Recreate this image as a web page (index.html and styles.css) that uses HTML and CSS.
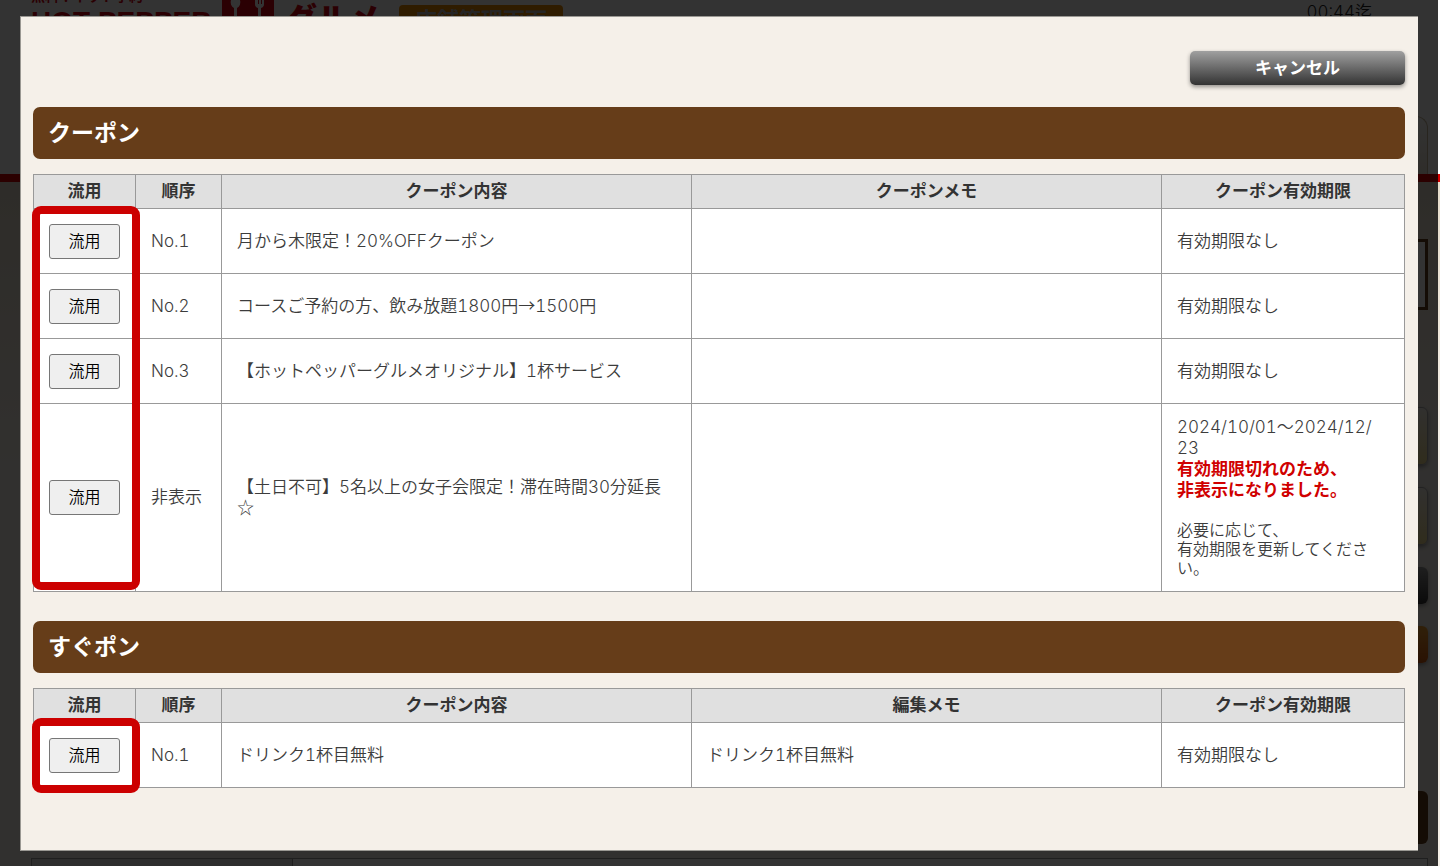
FILE: index.html
```html
<!DOCTYPE html>
<html lang="ja">
<head>
    <meta charset="UTF-8">
    <title>クーポン流用</title>
    <link rel="stylesheet" href="styles.css">
</head>
<body>

<div class="page">
    <header class="header">
        <div class="brand">
            <div class="logo">
                <span class="logo-sub">無料！ネット予約</span>
                <span class="logo-name">HOT PEPPER</span>
            </div>
            <svg class="logo-icon" width="54" height="44" viewBox="0 0 54 44">
                <rect x="1" y="-8" width="52" height="50" rx="6" fill="#d8000f"/>
                <path d="M10 0a5 6 0 0 0 3 8v22h3V8a5 6 0 0 0 3-8z" fill="#fff"/>
                <path d="M34 0v4a4 4 0 0 0 3 4v22h3V8a4 4 0 0 0 3-4V0h-2v4h-1V0h-2v4h-1V0z" fill="#fff"/>
            </svg>
            <span class="logo-gourmet">グルメ</span>
            <span class="logo-badge">店舗管理画面</span>
        </div>
        <div class="deadline">00:44迄</div>
        <div class="tab"></div>
    </header>
    <div class="main">
        <div class="notice"></div>
        <div class="panel"></div>
        <div class="panel"></div>
        <div class="bar bar-dark"></div>
        <div class="bar bar-orange"></div>
        <div class="bar-title"></div>
        <div class="grid-row"><div class="grid-label"></div></div>
    </div>
</div>

<div class="overlay">
    <div class="modal">
        <div class="actions">
            <button type="button" class="cancel">キャンセル</button>
        </div>

        <section class="section">
            <h2 class="title">クーポン</h2>
            <div class="table-wrap">
                <table class="coupons">
                    <colgroup>
                        <col class="col-use">
                        <col class="col-order">
                        <col>
                        <col>
                        <col class="col-limit">
                    </colgroup>
                    <thead>
                        <tr>
                            <th>流用</th>
                            <th>順序</th>
                            <th>クーポン内容</th>
                            <th>クーポンメモ</th>
                            <th>クーポン有効期限</th>
                        </tr>
                    </thead>
                    <tbody>
                        <tr>
                            <td><button type="button" class="use">流用</button></td>
                            <td>No.1</td>
                            <td>月から木限定！20%OFFクーポン</td>
                            <td></td>
                            <td>有効期限なし</td>
                        </tr>
                        <tr>
                            <td><button type="button" class="use">流用</button></td>
                            <td>No.2</td>
                            <td>コースご予約の方、飲み放題1800円<span class="symbol">→</span>1500円</td>
                            <td></td>
                            <td>有効期限なし</td>
                        </tr>
                        <tr>
                            <td><button type="button" class="use">流用</button></td>
                            <td>No.3</td>
                            <td>【ホットペッパーグルメオリジナル】1杯サービス</td>
                            <td></td>
                            <td>有効期限なし</td>
                        </tr>
                        <tr>
                            <td><button type="button" class="use">流用</button></td>
                            <td>非表示</td>
                            <td>【土日不可】5名以上の女子会限定！滞在時間30分延長<br><span class="symbol">☆</span></td>
                            <td></td>
                            <td>
                                2024/10/01〜2024/12/<br>23
                                <strong class="expired">有効期限切れのため、<br>非表示になりました。</strong>
                                <p class="hint">必要に応じて、<br>有効期限を更新してください。</p>
                            </td>
                        </tr>
                    </tbody>
                </table>
                <div class="frame"></div>
            </div>
        </section>

        <section class="section">
            <h2 class="title">すぐポン</h2>
            <div class="table-wrap">
                <table class="coupons">
                    <colgroup>
                        <col class="col-use">
                        <col class="col-order">
                        <col>
                        <col>
                        <col class="col-limit">
                    </colgroup>
                    <thead>
                        <tr>
                            <th>流用</th>
                            <th>順序</th>
                            <th>クーポン内容</th>
                            <th>編集メモ</th>
                            <th>クーポン有効期限</th>
                        </tr>
                    </thead>
                    <tbody>
                        <tr>
                            <td><button type="button" class="use">流用</button></td>
                            <td>No.1</td>
                            <td>ドリンク1杯目無料</td>
                            <td>ドリンク1杯目無料</td>
                            <td>有効期限なし</td>
                        </tr>
                    </tbody>
                </table>
                <div class="frame frame-single"></div>
            </div>
        </section>
    </div>
</div>

</body>
</html>
```
FILE: styles.css
```css
* {
    box-sizing: border-box;
}
body {
    margin: 0;
    color: #3c3c3c;
    font-family: Inter, "Noto Sans CJK JP", sans-serif;
    font-size: 17px;
    font-weight: 350;
    line-height: 21px;
    font-variant-numeric: tabular-nums;
}
.page {
    height: 100vh;
    overflow: hidden;
    background: #f5f0e8;
}

/* page behind the dialog */
.header {
    display: flex;
    justify-content: space-between;
    height: 182px;
    padding: 0 12px 0 31px;
    background: #fff;
    border-bottom: 8px solid #d80000;
}
.brand {
    display: flex;
    align-items: flex-start;
    flex: 1;
    color: #d8000f;
    font-weight: bold;
}
.logo {
    display: flex;
    flex-direction: column;
    margin-top: -12px;
    width: 190px;
    white-space: nowrap;
}
.logo-sub {
    font-size: 14px;
    line-height: 16px;
}
.logo-name {
    font-family: "Liberation Sans", sans-serif;
    font-size: 28px;
    line-height: 36px;
}
.logo-gourmet {
    margin: 4px 18px 0 10px;
    font-size: 32px;
    line-height: 32px;
    font-weight: 900;
}
.logo-badge {
    margin-top: 5px;
    padding: 3px 16px;
    border-radius: 4px;
    background: #e88a00;
    color: #bbb;
    font-size: 22px;
    line-height: 24px;
}
.deadline {
    margin-top: 2px;
    color: #222;
}
.tab {
    width: 56px;
    margin-top: 116px;
    border: 1px solid #c8b99c;
    border-bottom: 0;
    border-radius: 0 12px 0 0;
    background: linear-gradient(#fff, #eae2d2);
}
.main {
    padding: 57px 12px 20px 31px;
    background: linear-gradient(#e6dccb, #f5f0e8 280px);
}
.notice {
    height: 71px;
    margin-bottom: 97px;
    border: 3px solid #663d19;
    background: #fff;
}
.panel {
    height: 58px;
    margin-bottom: 22px;
    border: 1px solid #aaa;
    border-radius: 6px;
    background: linear-gradient(#f4f0e8, #f0dc90);
    box-shadow: 0 2px 4px #999;
}
.bar {
    height: 37px;
    margin-bottom: 22px;
    border-radius: 6px;
    box-shadow: 0 2px 4px #999;
}
.bar-dark {
    background: linear-gradient(#999, #333);
}
.bar-orange {
    background: linear-gradient(#f0a030, #d05a10);
}
.bar-title {
    height: 53px;
    margin: 128px 0 14px;
    border-radius: 6px;
    background: #663d19;
}
.grid-row {
    height: 60px;
    border: 1px solid #999;
    background: #fff;
}
.grid-label {
    width: 261px;
    height: 100%;
    border-right: 1px solid #999;
    background: #e0e0e0;
}

/* dialog */
.overlay {
    position: fixed;
    inset: 0 2px 0 0;
    padding: 16px 20px 15px 20px;
    background: rgba(0, 0, 0, 0.8);
}
.modal {
    height: 100%;
    padding: 34px 13px 0 12px;
    border: 1px solid #9a9893;
    border-right: 0;
    background: #f5f0e9;
}
.actions {
    display: flex;
    justify-content: flex-end;
    margin-bottom: 22px;
}
.cancel {
    width: 215px;
    height: 34px;
    padding: 0 0 3px;
    border: 0;
    border-radius: 5px;
    background: linear-gradient(#a0a0a0, #333);
    box-shadow: 0 2px 4px rgba(0, 0, 0, 0.4);
    color: #fff;
    font: bold 17px "Noto Sans CJK JP", sans-serif;
}
.section {
    margin-bottom: 29px;
}
.title {
    margin: 0 0 15px;
    padding: 0 15px;
    border-radius: 7px;
    background: #663d19;
    color: #fff;
    font-size: 23px;
    line-height: 52px;
}
.table-wrap {
    position: relative;
}
.coupons {
    width: 100%;
    table-layout: fixed;
    border-collapse: collapse;
    background: #fff;
}
.coupons th,
.coupons td {
    border: 1px solid #999;
}
.coupons th {
    height: 34px;
    padding: 0;
    background: #e0e0e0;
    color: #333;
}
.coupons td {
    height: 65px;
    padding: 13px 15px;
}
.col-use {
    width: 102px;
}
.col-order {
    width: 86px;
}
.col-limit {
    width: 243px;
}
.use {
    display: block;
    width: 71px;
    height: 35px;
    padding: 0 0 3px;
    border: 1px solid #767676;
    border-radius: 3px;
    background: #efefef;
    color: #000;
    font: 350 16px "Noto Sans CJK JP", sans-serif;
}
.symbol {
    font-family: "Noto Sans CJK JP", sans-serif;
    line-height: 1;
}
.expired {
    display: block;
    color: #d00000;
    font-weight: bold;
}
.hint {
    margin: 20px 0 0;
    font-size: 16px;
    line-height: 19px;
}
.frame {
    position: absolute;
    top: 32px;
    bottom: 2px;
    left: -1px;
    width: 108px;
    border: 8px solid #c00;
    border-radius: 9px;
    pointer-events: none;
}
.frame-single {
    top: 30px;
    bottom: -5px;
}
```
